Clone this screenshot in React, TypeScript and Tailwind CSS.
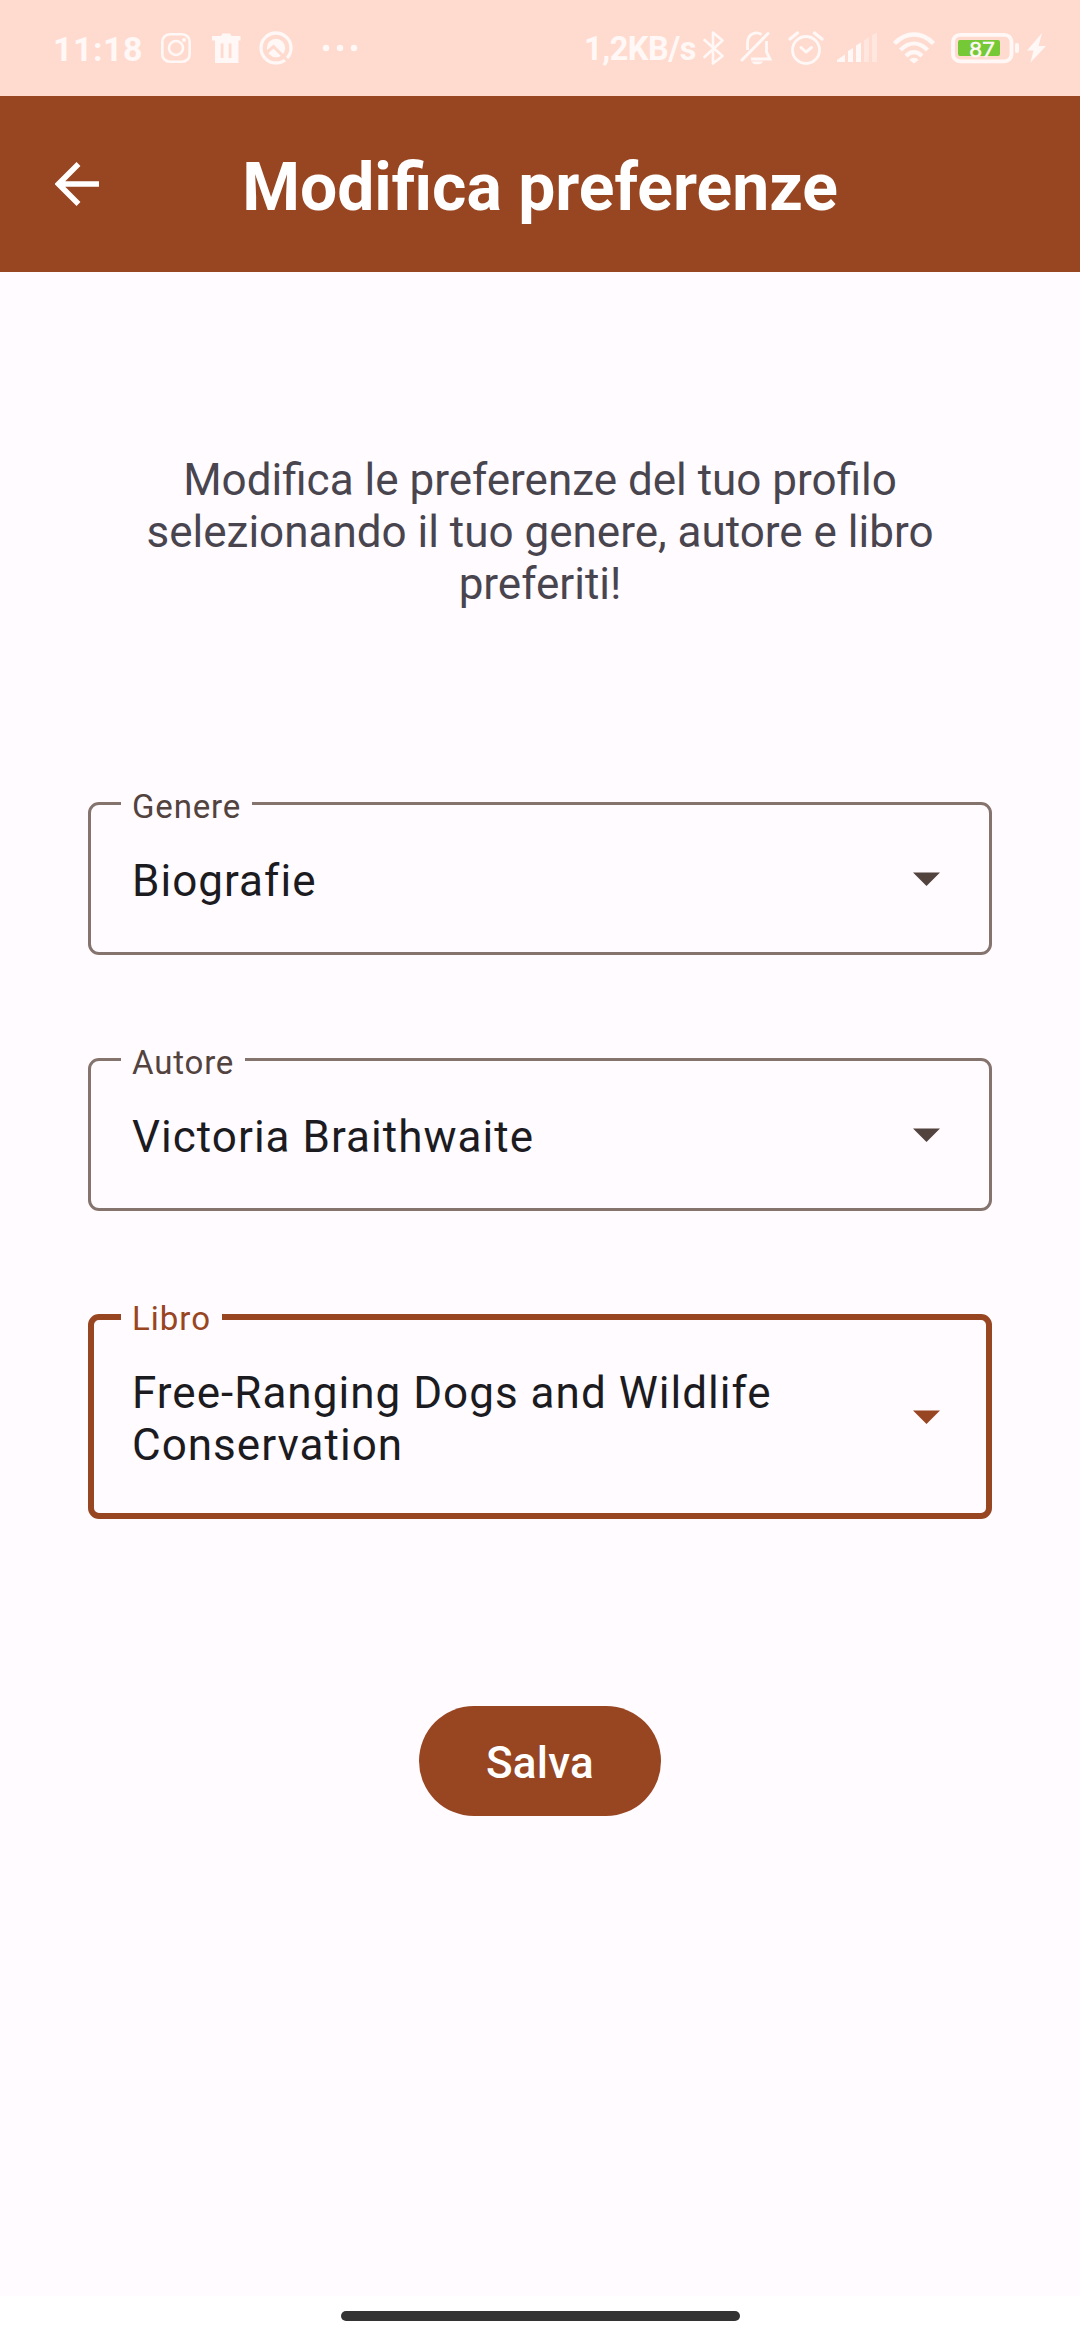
import React from "react";

type FieldProps = {
  label: string;
  value: string;
  focused?: boolean;
};

function SelectField({ label, value, focused = false }: FieldProps) {
  return (
    <div
      className={
        focused
          ? "relative flex h-[205px] items-start justify-between rounded-[11px] border-[6px] border-[#984522] pl-[38px] pr-[46px] pt-[47px]"
          : "relative flex h-[153px] items-start justify-between rounded-[11px] border-[3px] border-[#85736d] pl-[41px] pr-[49px] pt-[50px]"
      }
    >
      <span
        className={
          focused
            ? "absolute left-[27px] -top-[21px] bg-[#fffbff] px-[11px] text-[33px] leading-[39px] tracking-[1px] text-[#984522]"
            : "absolute left-[30px] -top-[18px] bg-[#fffbff] px-[11px] text-[33px] leading-[39px] tracking-[0.825px] text-[#53433e]"
        }
      >
        {label}
      </span>
      <p className="w-[700px] text-[44px] leading-[52px] tracking-[1.03px] text-[#1c1b1f] [font-variant-ligatures:none]">
        {value}
      </p>
      <svg
        viewBox="0 0 27 14"
        className={
          focused
            ? "mt-[43px] h-[14px] w-[27px] shrink-0 text-[#984522]"
            : "mt-[17px] h-[14px] w-[27px] shrink-0 text-[#53433e]"
        }
      >
        <path d="M0 .4H27L13.5 14Z" fill="currentColor" />
      </svg>
    </div>
  );
}

function StatusBar() {
  return (
    <header className="flex h-[96px] items-center bg-[#ffdbcf] text-[#fff8f6]">
      <span className="ml-[53px] w-[108px] pt-[2px] text-[34px] leading-none font-bold tracking-[0.5px] whitespace-nowrap">11:18</span>
      {/* Notification icons */}
      <svg viewBox="0 0 200 36" className="h-[36px] w-[200px]" fill="none" stroke="currentColor">
        <rect x="1.3" y="4.3" width="27.4" height="27.4" rx="7.5" strokeWidth="2.6" />
        <circle cx="15" cy="18" r="7" strokeWidth="2.6" />
        <circle cx="23" cy="10" r="2" fill="currentColor" stroke="none" />
        <path
          d="M51 6H60L61.500 3.500H69L70.500 6H79.500V10.500H77.500V33H54V10.500H51ZM59.700 13.500V28H62.500V13.500ZM67.700 13.500V28H70.500V13.500Z"
          fill="currentColor"
          fillRule="evenodd"
          stroke="none"
        />
        <circle cx="115" cy="18" r="15" strokeWidth="3.3" />
        <circle cx="115" cy="18" r="9.2" fill="currentColor" stroke="none" />
        <path d="M104.500 23.500L112.500 16.500L128 32" stroke="#ffdbcf" strokeWidth="3" />
        <g fill="currentColor" stroke="none">
          <circle cx="165" cy="18" r="3.200" />
          <circle cx="179" cy="18" r="3.200" />
          <circle cx="193" cy="18" r="3.200" />
        </g>
      </svg>
      <span className="ml-[223px] w-[116px] pt-[3px] text-[32.500px] leading-none font-bold tracking-[-0.5px] whitespace-nowrap">1,2KB/s</span>
      {/* System icons */}
      <svg viewBox="700 30 360 36" className="h-[36px] w-[360px]" fill="none" stroke="currentColor">
        <path d="M704.500 40L722.500 56L713 63.500V32.500L722.500 40.500L704.500 57" strokeWidth="2.600" strokeLinejoin="round" strokeLinecap="round" />
        <path d="M742 60L768 33.500" strokeWidth="3" strokeLinecap="round" />
        <path d="M747.500 50V43C747.500 32.500 757 31.500 761.500 34.500M766.500 41V52L770 59H751" strokeWidth="2.800" />
        <path d="M751.500 61.500H763A6 4 0 0 1 751.500 61.500Z" fill="currentColor" stroke="none" />
        <circle cx="806" cy="50" r="13.500" strokeWidth="2.800" />
        <path d="M790 39L797.500 33M822 39L814.500 33" strokeWidth="3.400" strokeLinecap="round" />
        <path d="M801 47.500L806 52L811.500 47.500" strokeWidth="3" strokeLinecap="round" strokeLinejoin="round" />
        <g fill="currentColor" stroke="none">
          <path d="M837 62V60L845 54.500V62Z" />
          <path d="M848 62V51L853 48V62Z" />
          <path d="M856 62V45.500L861 42.500V62Z" />
          <path d="M864 62V40.500L869 37V62Z" opacity=".4" />
          <path d="M872 62V35L877 32.500V62Z" opacity=".4" />
        </g>
        <path d="M894.500 43.500C906 31.500 922 31.500 933.500 43.500M900.500 50C909 41.500 919 41.500 927.500 50M906 56C911 51 917 51 922 56" strokeWidth="4.300" />
        <path d="M909.500 60C911.500 57 916.500 57 918.500 60L914 63.500Z" fill="currentColor" stroke="none" />
        <rect x="953" y="34.800" width="58.500" height="26.500" rx="7" strokeWidth="3.800" />
        <rect x="958" y="40" width="42" height="16" rx="2" fill="#76c936" stroke="none" />
        <rect x="1015" y="43" width="4" height="10" rx="2" fill="currentColor" stroke="none" />
        <path d="M1042 33L1027 50.500H1033.500L1030.500 62.500L1046 46H1038.500Z" fill="currentColor" stroke="none" />
        <text x="982" y="56.500" textAnchor="middle" fontSize="22" strokeWidth="0.5" fill="#fff8f6" className="font-['Lato']">87</text>
      </svg>
    </header>
  );
}

export default function App() {
  return (
    <div className="flex h-[2340px] w-[1080px] flex-col bg-[#fffbff] font-['Roboto',sans-serif]">
      <StatusBar />

      <div className="grid h-[176px] grid-cols-[200px_1fr_200px] items-center bg-[#984522] text-white">
        <svg viewBox="0 0 44 44" className="ml-[55px] h-[44px] w-[44px]" fill="none" stroke="currentColor" strokeWidth="5.500">
          <path d="M44 22H5M23.500 2L3.500 22L23.500 42" />
        </svg>
        <h1 className="mt-[8px] text-center text-[66px] leading-[78px] font-bold whitespace-nowrap">Modifica preferenze</h1>
      </div>

      <main className="flex grow flex-col px-[88px]">
        <p className="mt-[182px] text-center text-[44px] leading-[52px] text-[#49454f]">
          Modifica le preferenze del tuo profilo
          <br />
          selezionando il tuo genere, autore e libro
          <br />
          preferiti!
        </p>

        <div className="mt-[192px] flex flex-col gap-[103px]">
          <SelectField label="Genere" value="Biografie" />
          <SelectField label="Autore" value="Victoria Braithwaite" />
          <SelectField label="Libro" value="Free-Ranging Dogs and Wildlife Conservation" focused />
        </div>

        <button className="mt-[187px] h-[110px] w-[242px] self-center rounded-full bg-[#984522] pt-[4px] text-[44px] leading-[52px] font-medium tracking-[0.275px] text-white">
          Salva
        </button>
      </main>

      <footer className="flex h-[44px] items-start justify-center bg-white pt-[15px]">
        <div className="h-[10px] w-[399px] rounded-full bg-[#333333]" />
      </footer>
    </div>
  );
}
